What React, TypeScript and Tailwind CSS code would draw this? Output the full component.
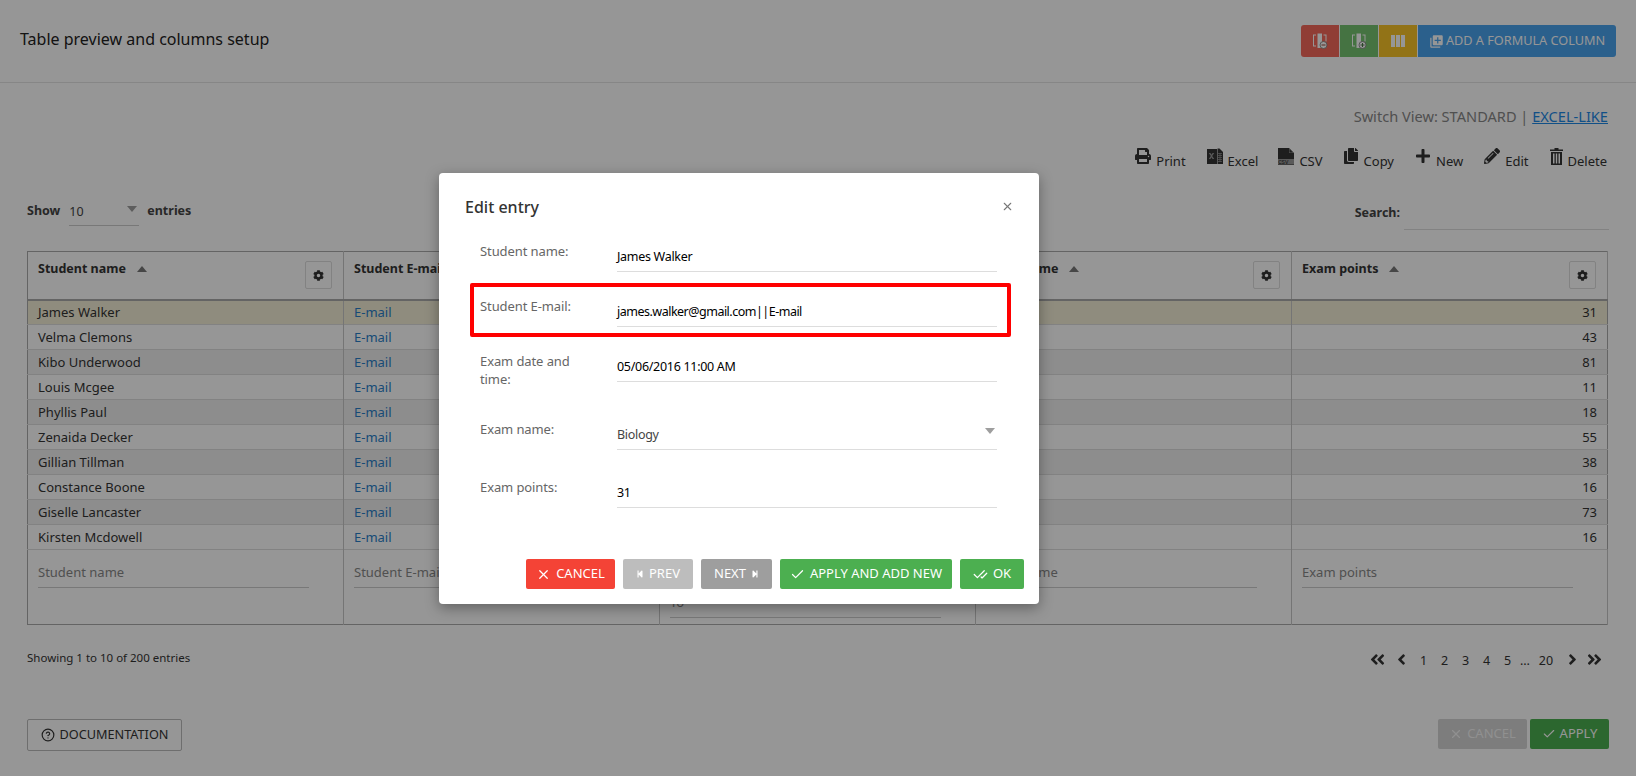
import { Check, CheckCheck, CircleHelp, X } from 'lucide-react';
import { FaAngleDoubleLeft, FaAngleDoubleRight, FaAngleLeft, FaAngleRight, FaCog, FaCopy, FaPencilAlt, FaPlus, FaPrint, FaStepBackward, FaStepForward } from 'react-icons/fa';
import { MdLibraryAdd } from 'react-icons/md';

const rows = [
  ['James Walker', 31],
  ['Velma Clemons', 43],
  ['Kibo Underwood', 81],
  ['Louis Mcgee', 11],
  ['Phyllis Paul', 18],
  ['Zenaida Decker', 55],
  ['Gillian Tillman', 38],
  ['Constance Boone', 16],
  ['Giselle Lancaster', 73],
  ['Kirsten Mcdowell', 16],
];

// the date column sits fully behind the dialog, so it has no visible title
const columns = ['Student name', 'Student E-mail', '', 'Exam name', 'Exam points'];

const ColumnIcon = ({ sign }: { sign: 'minus' | 'plus' }) => (
  <svg viewBox="0 0 16 16" className="h-4 w-4" fill="currentColor">
    <path d="M4 1.500H1v12h3v-1H2v-10h2zM11.500 1.500h3v7h-1v-6h-2z" />
    <rect x="5.500" y="0.500" width="4.500" height="14.500" />
    <circle cx="11.500" cy="12" r="3.500" stroke="#777" strokeWidth="0.800" />
    {sign === 'minus' ? (
      <rect x="9.500" y="11.500" width="4" height="1" fill="#984038" />
    ) : (
      <path d="M9.500 11.500h1.500V10h1v1.500h1.500v1H12V14h-1v-1.500H9.500z" fill="#4a7746" />
    )}
  </svg>
);

const ExcelIcon = () => (
  <svg viewBox="0 0 16 17" className="h-[17px] w-4" fill="currentColor">
    <path d="M0 1h10v15H0z" />
    <path d="M10.500 0.500l2 0 3.500 3.500V16h-5.500z" />
    <path d="M1.800 5l2 3-2 3h1.600l1.100-1.800L5.600 11h1.600l-2-3 2-3H5.600L4.500 6.800 3.400 5z" fill="#999" />
    <path d="M11 5.500h4M11 7.500h4M11 9.500h4M11 11.500h4M11 13.500h4M13 5v9" stroke="#999" strokeWidth="0.700" />
  </svg>
);

const CsvIcon = () => (
  <svg viewBox="0 0 16 17" className="h-[17px] w-4" fill="currentColor">
    <path d="M0 0h11l5 5v12H0z" />
    <path d="M11 0l5 5h-5z" fill="#999" />
    <path d="M11.500 1l3.500 3.500h-3.500z" />
    <rect x="0" y="10.500" width="16" height="6" fill="#999" />
    <path d="M0 10h16v1H0z" />
    <text x="0.200" y="16" fontSize="6.800" fontFamily="Liberation Sans, sans-serif">csv</text>
  </svg>
);

const TrashIcon = () => (
  <svg viewBox="0 0 13 17" className="h-[17px] w-[13px]" fill="currentColor">
    <path d="M4.500 0h4v1.500H13V3H0V1.500h4.500z" />
    <path d="M1 4h11v13H1zM3 5.500v10h1.500v-10zM5.800 5.500v10h1.400v-10zM8.500 5.500v10H10v-10z" fillRule="evenodd" />
  </svg>
);

const SortUp = () => <span className="inline-block h-0 w-0 border-x-[5.500px] border-b-[6px] border-x-transparent border-b-[#777]" />;

const SelectArrow = () => <span className="inline-block h-0 w-0 border-x-[5px] border-t-[6px] border-x-transparent border-t-[#9e9e9e]" />;

const ToolItem = ({ icon, label, className }: { icon: React.ReactNode; label: string; className: string }) => (
  <div className={`flex items-start text-[#333] ${className}`}>
    <span className="flex h-[18px] items-start">{icon}</span>
    <span className="mt-[4px] text-[13px] leading-[18px]">{label}</span>
  </div>
);

const Field = ({ label, value, className, select }: { label: string; value: React.ReactNode; className: string; select?: boolean }) => (
  <div className={`flex ${className}`}>
    <div className="w-[137px] pr-[20px] pt-[3px] text-[13px] leading-[18px] tracking-[-0.1px] text-[#666]">{label}</div>
    <div className="h-[33px] flex-1 border-b border-[#ddd] pt-[9px]">
      <div className="flex items-start justify-between pr-[2px]">
        <span className={`text-[12.500px] leading-[18px] tracking-[-0.3px] ${select ? 'text-[#444]' : 'text-black'}`}>{value}</span>
        {select && <span className="mt-[2px] flex"><SelectArrow /></span>}
      </div>
    </div>
  </div>
);

const ModalButton = ({ bg, className, children }: { bg: string; className: string; children: React.ReactNode }) => (
  <button className={`flex h-[30px] items-center justify-center gap-[5px] rounded-[2px] text-[13px] text-white ${bg} ${className}`}>{children}</button>
);

export default function App() {
  return (
    <div className="relative h-[776px] w-[1636px] overflow-hidden bg-white font-['Noto_Sans',sans-serif] text-[#333]">
      <header className="flex h-[83px] items-start justify-between border-b border-[#e4e4e4] pl-[20px] pr-[20px] pt-[25px]">
        <h1 className="pt-[1px] text-[16px] leading-[26px] text-[#222]">Table preview and columns setup</h1>
        <div className="flex h-[32px] text-white">
          <div className="flex w-[38px] items-center justify-center rounded-l-[3px] bg-[#f5685a]"><ColumnIcon sign="minus" /></div>
          <div className="ml-px flex w-[38px] items-center justify-center bg-[#76c370]"><ColumnIcon sign="plus" /></div>
          <div className="ml-px flex w-[38px] items-center justify-center bg-[#f8c327]">
            <div className="flex h-[12px] gap-px"><span className="w-[4px] bg-white" /><span className="w-[4px] bg-white" /><span className="w-[4px] bg-white" /></div>
          </div>
          <div className="ml-px flex w-[198px] items-center justify-center gap-[2px] rounded-r-[3px] bg-[#4aa3ee] text-[12.700px]">
            <MdLibraryAdd className="h-[15px] w-[15px]" />
            ADD A FORMULA COLUMN
          </div>
        </div>
      </header>

      <main className="px-[27px]">
        <div className="mt-[24px] flex h-[20px] items-center justify-end pr-[1px] text-[14.600px] text-[#888]">
          Switch View: STANDARD |&nbsp;<a className="text-[#1e88e5] underline">EXCEL-LIKE</a>
        </div>

        <div className="mt-[21px] flex h-[24px] justify-end pr-[2px]">
          <ToolItem className="gap-[5px]" icon={<FaPrint className="h-4 w-4" />} label="Print" />
          <ToolItem className="ml-[21px] gap-[5px]" icon={<ExcelIcon />} label="Excel" />
          <ToolItem className="ml-[20px] gap-[5px]" icon={<CsvIcon />} label="CSV" />
          <ToolItem className="ml-[20px] gap-[5px]" icon={<FaCopy className="h-4 w-4" />} label="Copy" />
          <ToolItem className="ml-[21px] gap-[5px]" icon={<FaPlus className="h-4 w-4" />} label="New" />
          <ToolItem className="ml-[21px] gap-[5px]" icon={<FaPencilAlt className="h-4 w-4" />} label="Edit" />
          <ToolItem className="ml-[22px] gap-[4px]" icon={<TrashIcon />} label="Delete" />
        </div>

        <div className="mt-[28px] flex h-[51px] items-start justify-between">
          <div className="flex items-start text-[12.500px] font-bold leading-[18px] text-[#444]">
            <span className="mt-[2px]">Show</span>
            <div className="ml-[9px] flex h-[26px] w-[70px] justify-between border-b border-[#ccc] pr-[2px]">
              <span className="mt-[3px] text-[12.500px] font-normal text-[#444]">10</span>
              <span className="mt-[6px] flex h-[8px]"><SelectArrow /></span>
            </div>
            <span className="ml-[8px] mt-[2px]">entries</span>
          </div>
          <div className="flex items-start">
            <span className="mt-[4px] text-[12.500px] font-bold leading-[18px] text-[#444]">Search:</span>
            <div className="ml-[4px] h-[30px] w-[205px] border-b border-[#ddd]" />
          </div>
        </div>

        <table className="w-[1581px] table-fixed border-collapse border border-[#aaa] text-[13px]">
          <thead>
            <tr className="h-[48px] border-b-2 border-[#aaa]">
              {columns.map((c, i) => (
                <th key={i} className="relative border-r border-[#c8c8c8] px-[10px] pb-[18px] pt-[8px] text-left align-top">
                  <div className="flex items-center gap-[11px] text-[12.500px] font-bold leading-[18px] text-[#333]">
                    {c}
                    {c && <SortUp />}
                  </div>
                  <div className="absolute right-[11px] top-[9px] flex h-[28px] w-[27px] items-center justify-center rounded-[2px] border border-[#ddd]">
                    <FaCog className="h-[11px] w-[11px] text-[#333]" />
                  </div>
                </th>
              ))}
            </tr>
          </thead>
          <tbody>
            {rows.map(([name, points], i) => (
              <tr key={String(name)} className={`h-[25px] border-b border-[#ddd] ${i === 0 ? 'bg-[#f3eed6]' : i % 2 === 0 ? 'bg-[#f0f0f0]' : 'bg-white'}`}>
                <td className="border-r border-[#c8c8c8] px-[10px] leading-[18px] text-[#333]">{name}</td>
                <td className="border-r border-[#c8c8c8] px-[10px] leading-[18px] text-[#2a7fc9]">E-mail</td>
                <td className="border-r border-[#c8c8c8]" />
                <td className="border-r border-[#c8c8c8]" />
                <td className="px-[10px] text-right leading-[18px]">{points}</td>
              </tr>
            ))}
          </tbody>
          <tfoot>
            <tr className="h-[75px] border-t border-[#aaa]">
              {columns.map((c, i) => (
                <td key={i} className="border-r border-[#c8c8c8] pl-[10px] pr-[33px] pt-[13px] align-top">
                  <div className={`h-[25px] w-[271px] text-[13px] leading-[18px] text-[#888] ${i === 2 ? '' : 'border-b border-[#ccc]'}`}>{c}</div>
                  {i === 2 && <div className="mt-[5px] h-[25px] w-[271px] border-b border-[#ccc] text-[13px] leading-[18px] text-[#888]">To</div>}
                </td>
              ))}
            </tr>
          </tfoot>
        </table>

        <div className="mt-[24px] flex items-start justify-between">
          <span className="text-[11.500px] leading-[18px] text-[#333]">Showing 1 to 10 of 200 entries</span>
          <div className="flex h-[24px] items-center pr-[6px] text-[12.500px] text-[#333]">
            <FaAngleDoubleLeft className="-mt-[4px] h-[17px] w-[17px]" />
            <FaAngleLeft className="-mt-[4px] ml-[9px] h-[17px] w-[13px]" />
            <span className="ml-[5px] w-[21px] text-center">1</span>
            <span className="w-[21px] text-center">2</span>
            <span className="w-[21px] text-center">3</span>
            <span className="w-[21px] text-center">4</span>
            <span className="w-[21px] text-center">5</span>
            <span className="w-[14px] text-center">…</span>
            <span className="w-[28px] text-center">20</span>
            <FaAngleRight className="-mt-[4px] ml-[6px] h-[17px] w-[13px]" />
            <FaAngleDoubleRight className="-mt-[4px] ml-[7px] h-[17px] w-[17px]" />
          </div>
        </div>

        <div className="mt-[46px] flex items-start justify-between">
          <button className="flex h-[32px] w-[155px] items-center justify-center gap-[5px] rounded-[2px] border border-[#bbb] text-[12.700px] text-[#333]">
            <CircleHelp className="h-[14px] w-[14px]" />
            DOCUMENTATION
          </button>
          <div className="flex gap-[3px]">
            <button className="flex h-[30px] w-[89px] items-center justify-center gap-[4px] rounded-[2px] bg-[#d4d4d4] text-[13px] text-[#f5f5f5]">
              <X className="h-[14px] w-[14px]" />
              CANCEL
            </button>
            <button className="flex h-[30px] w-[79px] items-center justify-center gap-[4px] rounded-[2px] bg-[#4caf50] text-[13px] text-white">
              <Check className="h-[14px] w-[14px]" />
              APPLY
            </button>
          </div>
        </div>
      </main>

      <div className="absolute inset-0 bg-black/[0.41]" />

      <div className="absolute left-[439px] top-[173px] h-[431px] w-[600px] rounded-[4px] bg-white pl-[26px] pr-[27px] pt-[22px] shadow-[0_4px_14px_rgba(0,0,0,0.35)]">
        <div className="flex items-start justify-between">
          <h2 className="text-[16px] font-medium leading-[24px] text-[#333]">Edit entry</h2>
          <X className="mr-[-2px] mt-[5px] h-[13px] w-[13px] text-[#777]" />
        </div>

        <div className="pl-[15px] pr-[15px]">
          <Field className="mt-[20px]" label="Student name:" value="James Walker" />
          <Field className="mt-[22px]" label="Student E-mail:" value={<span className="tracking-[-0.5px]">james.walker@gmail.com||E-mail</span>} />
          <Field className="mt-[22px]" label="Exam date and time:" value="05/06/2016 11:00 AM" />
          <Field className="mt-[29px]" label="Exam name:" value="Biology" select />
          <Field className="mt-[25px]" label="Exam points:" value="31" />
        </div>

        <div className="mr-[-12px] mt-[51px] flex justify-end gap-[8px]">
          <ModalButton bg="bg-[#f44336]" className="w-[89px]"><X className="h-[15px] w-[15px]" />CANCEL</ModalButton>
          <ModalButton bg="bg-[#bdbdbd]" className="w-[70px]"><FaStepBackward className="h-[8px] w-[8px]" />PREV</ModalButton>
          <ModalButton bg="bg-[#9e9e9e]" className="w-[71px]">NEXT<FaStepForward className="h-[8px] w-[8px]" /></ModalButton>
          <ModalButton bg="bg-[#4caf50]" className="w-[172px]"><Check className="h-[15px] w-[15px]" />APPLY AND ADD NEW</ModalButton>
          <ModalButton bg="bg-[#4caf50]" className="w-[64px]"><CheckCheck className="h-[15px] w-[15px]" />OK</ModalButton>
        </div>

        <div className="absolute left-[31px] top-[110px] h-[54px] w-[541px] rounded-[2px] border-[4px] border-[#ff0000]" />
      </div>
    </div>
  );
}
